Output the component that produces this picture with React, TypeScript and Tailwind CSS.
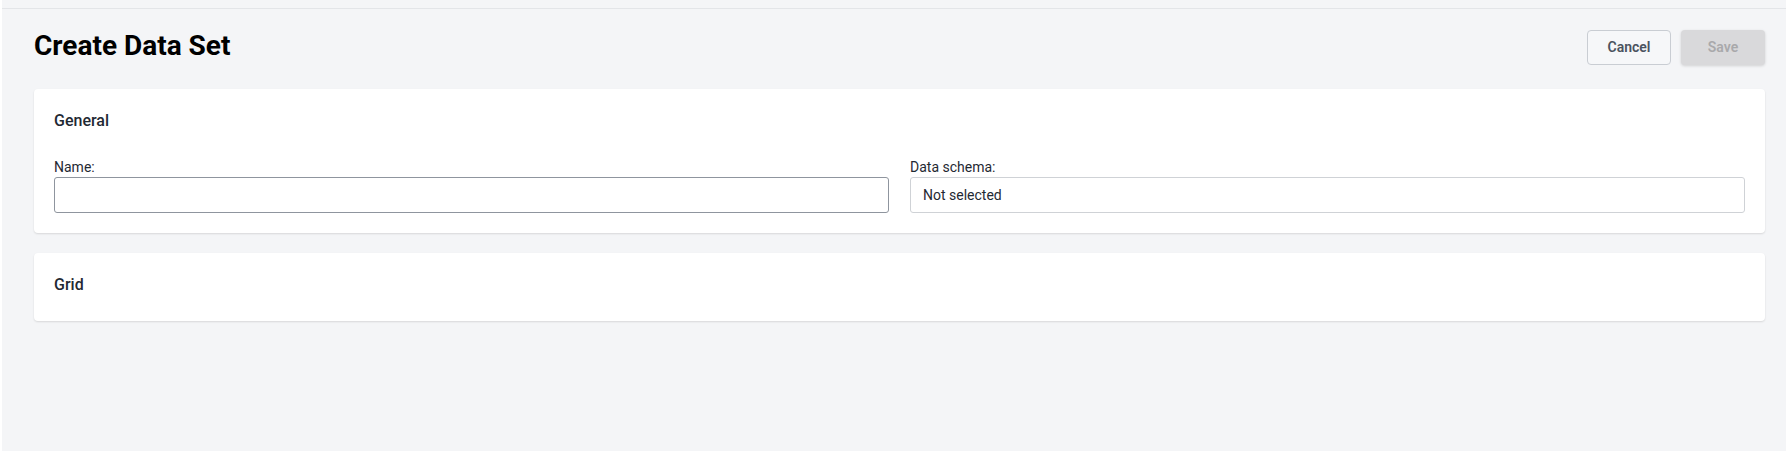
import React, { useState } from 'react';

const font = { fontFamily: 'Roboto, "Noto Sans", sans-serif' };

const Card: React.FC<{ title: string; children?: React.ReactNode; className?: string }> = ({ title, children, className }) => (
  <section className={`bg-white rounded-[4px] shadow-[0_1px_2px_rgba(0,0,0,0.12)] px-5 pt-5 ${className ?? ''}`}>
    <h2 className="text-[16px] leading-6 font-medium text-[#1f2933]">{title}</h2>
    {children}
  </section>
);

const App: React.FC = () => {
  const [name, setName] = useState('');

  return (
    <div className="min-h-[451px] flex bg-white" style={font}>
      <div className="w-[2px] shrink-0 bg-white" />
      <div className="flex-1 flex flex-col">
        <div className="h-[8px] bg-[#f4f5f7] border-b border-[#e3e5e8] box-content" />
        <main className="flex-1 bg-[#f4f5f7] pl-[32px] pr-[21px] pb-8">
          <header className="flex items-start justify-between pt-[19px] h-[80px]">
            <h1 className="text-[28px] leading-9 font-bold text-black">Create Data Set</h1>
            <div className="flex gap-[10px] pt-[2px]">
              <button className="w-[84px] h-[35px] rounded-[4px] border border-[#c9cdd3] bg-[#f6f7f9] text-[14px] font-semibold text-[#4b5360]">
                Cancel
              </button>
              <button
                disabled
                className="w-[84px] h-[35px] rounded-[4px] bg-[#d9d9db] text-[14px] font-semibold text-[#a9a9ab] shadow-[0_1px_3px_rgba(0,0,0,0.15)] cursor-not-allowed"
              >
                Save
              </button>
            </div>
          </header>

          <div className="flex flex-col gap-5">
            <Card title="General" className="pb-5">
              <div className="grid grid-cols-2 gap-[21px] mt-[24px]">
                <label className="flex flex-col">
                  <span className="text-[14px] leading-5 text-[#1f2933]">Name:</span>
                  <input
                    value={name}
                    onChange={(e) => setName(e.target.value)}
                    className="h-[36px] rounded-[3px] border border-[#8f959e] px-3 text-[14px] text-[#1f2933] outline-none"
                  />
                </label>
                <label className="flex flex-col">
                  <span className="text-[14px] leading-5 text-[#1f2933]">Data schema:</span>
                  <div className="h-[36px] rounded-[3px] border border-[#cfd2d6] px-3 flex items-center text-[14px] text-[#1f2933]">
                    Not selected
                  </div>
                </label>
              </div>
            </Card>
            <Card title="Grid" className="h-[68px]" />
          </div>
        </main>
      </div>
    </div>
  );
};

export default App;
